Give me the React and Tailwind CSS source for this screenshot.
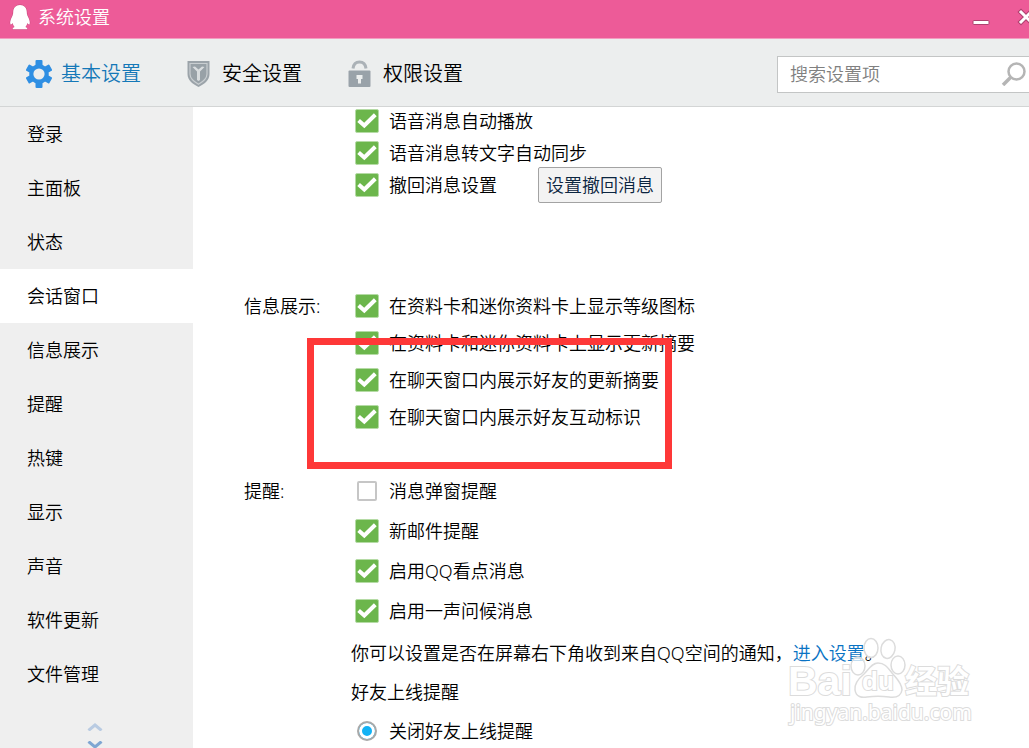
import React from "react";

const sections = ["登录", "主面板", "状态", "会话窗口", "信息展示", "提醒", "热键", "显示", "声音", "软件更新", "文件管理"];

function Penguin() {
  return (
    <svg className="h-7 w-6 shrink-0" viewBox="0 0 24 28" aria-hidden="true">
      <path
        d="M12 2C7.800 2 5.200 5 5.200 9.200C5.200 11 4.800 12 3.900 14C2.500 16.800 1.800 19.500 2.400 21C3 22.200 4 21 4.600 20C5 21.800 5.800 23 6.600 24C5 24.700 4.300 25.500 4.800 26.300H19.200C19.700 25.500 19 24.700 17.400 24C18.200 23 19 21.800 19.400 20C20 21 21 22.200 21.600 21C22.200 19.500 21.500 16.800 20.100 14C19.200 12 18.800 11 18.800 9.200C18.800 5 16.200 2 12 2Z"
        fill="#fff"
        stroke="#c64a7d"
        strokeWidth="1"
        paintOrder="stroke"
      />
    </svg>
  );
}

function Gear() {
  return (
    <svg className="h-7 w-[26px]" viewBox="0 0 26 28" aria-hidden="true">
      <g fill="#2f8fe3">
        <rect x="9.500" y="0" width="7" height="28" rx="1" />
        <rect x="9.500" y="0.500" width="7" height="27" rx="1" transform="rotate(60 13 14)" />
        <rect x="9.500" y="0.500" width="7" height="27" rx="1" transform="rotate(-60 13 14)" />
        <circle cx="13" cy="14" r="9.800" />
      </g>
      <circle cx="13" cy="14" r="5.600" fill="#eceeee" />
    </svg>
  );
}

function Shield() {
  return (
    <svg className="h-7 w-6" viewBox="0 0 24 28" aria-hidden="true">
      <path d="M0.500 1H22.500V14C22.500 20 17.500 24 11.500 27C5.500 24 0.500 20 0.500 14Z" fill="#9ba3a9" />
      <path d="M3 3.500H20V14C20 18.500 16 21.700 11.500 24.300C7 21.700 3 18.500 3 14Z" fill="#98a1a7" stroke="#c9ced1" strokeWidth="1.200" />
      <path d="M5.500 7L10 11.500V20L11.500 21L13 20V11.500L17.500 7L15 6.500L11.500 9.500L8 6.500Z" fill="#d9dddf" />
    </svg>
  );
}

function Lock() {
  return (
    <svg className="h-7 w-6" viewBox="0 0 24 28" aria-hidden="true">
      <path d="M5 8.500C5.500 4 8 2 11.500 2S17.500 4 18 8.500" fill="none" stroke="#abb2b7" strokeWidth="3" />
      <rect x="0.500" y="10.500" width="22" height="16.500" rx="1" fill="#99a2a9" />
      <path d="M8.500 15H14.500V19H13V23.500H10V19H8.500Z" fill="#eceeee" />
    </svg>
  );
}

const tabs = [
  { name: "基本设置", Icon: Gear, style: "text-[#1478b8]" },
  { name: "安全设置", Icon: Shield, style: "text-black" },
  { name: "权限设置", Icon: Lock, style: "text-black" },
];

function Check({ children, off = false }) {
  return (
    <label className="flex items-center gap-[10px] whitespace-nowrap">
      <span className="relative flex size-6 shrink-0 items-center justify-center">
        <input
          type="checkbox"
          defaultChecked={!off}
          className="peer size-5 appearance-none rounded-[2px] border-2 border-[#c6c6c6] bg-white checked:size-6 checked:border checked:border-[#b5dba5] checked:bg-[#6cb64c]"
        />
        <svg className="pointer-events-none absolute inset-0 hidden size-6 peer-checked:block" viewBox="0 0 24 24" aria-hidden="true">
          <path d="M3.600 11.500L9.300 16.500L20.300 5.800" fill="none" stroke="#fff" strokeWidth="4" />
        </svg>
      </span>
      <span>{children}</span>
    </label>
  );
}

function Watermark() {
  return (
    <svg className="pointer-events-none absolute right-[52px] bottom-[18px] h-[96px] w-[192px]" viewBox="0 0 192 96" aria-hidden="true">
      <g fill="#fff" fillOpacity="0.750" stroke="#dcdcdc" strokeWidth="1.500">
        <ellipse cx="73" cy="32" rx="7" ry="9" />
        <ellipse cx="86" cy="14" rx="7" ry="9.500" />
        <ellipse cx="103" cy="15" rx="7" ry="9.500" transform="rotate(12 103 15)" />
        <ellipse cx="113" cy="31" rx="7" ry="9" />
        <path d="M93 29C87 29 84 35 79 40C73 45 69 50 70 56C71 63 77 64 82 63C89 62 97 62 104 63C111 64 116 62 117 56C117 49 111 44 107 39C103 34 100 29 93 29Z" />
      </g>
      <g fill="#fff" stroke="#dcdcdc" strokeWidth="2" paintOrder="stroke">
        <g fontFamily="'Liberation Sans', 'Noto Sans CJK SC', sans-serif" fontWeight="700">
          <text x="3" y="61" fontSize="41">Bai</text>
          <text x="77" y="56" fontSize="26">du</text>
          <text x="120" y="59" fontSize="32">经验</text>
        </g>
        <text x="5" y="86" fontSize="21" fontWeight="400" fontFamily="'Noto Sans', sans-serif">jingyan.baidu.com</text>
      </g>
    </svg>
  );
}

export default function App() {
  return (
    <div className="flex h-screen flex-col overflow-hidden bg-white font-['Noto_Sans','Noto_Sans_CJK_SC',sans-serif] text-[18px] leading-6 font-[350] text-black">
      <header className="flex h-[39px] shrink-0 items-center border-b border-[#f39dc0] bg-[#ed5b98] pb-1 pl-2 text-white">
        <Penguin />
        <h1 className="ml-1.5">系统设置</h1>
        <div className="ml-auto flex">
          <button type="button" aria-label="最小化" className="h-8 w-11">
            <svg className="h-8 w-11" viewBox="0 0 44 32">
              <rect x="16" y="19.500" width="16" height="4" rx="1" fill="#fff" stroke="#ae416f" />
            </svg>
          </button>
          <button type="button" aria-label="关闭" className="h-8 w-7">
            <svg className="h-8 w-7" viewBox="0 0 28 32">
              <g fill="none" strokeLinecap="square">
                <path d="M20 11L30 21M30 11L20 21" stroke="#ae416f" strokeWidth="5" />
                <path d="M20 11L30 21M30 11L20 21" stroke="#fff" strokeWidth="3" />
              </g>
            </svg>
          </button>
        </div>
      </header>

      <div className="flex h-[68px] shrink-0 items-center border-b border-[#d3d5d5] bg-[#eceeee] pt-[3px] pl-[26px]">
        <nav className="flex gap-[46px] text-[20px]">
          {tabs.map(({ name, Icon, style }) => (
            <button key={name} type="button" className={`flex items-center gap-[9px] whitespace-nowrap ${style}`}>
              <span className="flex w-[26px]"><Icon /></span>
              {name}
            </button>
          ))}
        </nav>
        <div className="ml-auto flex h-[37px] w-[252px] items-center border border-r-0 border-[#c3c5c5] bg-white pl-3">
          <input type="text" aria-label="搜索设置项" placeholder="搜索设置项" className="min-w-0 flex-1 outline-none placeholder:text-[#808080]" />
          <button type="button" aria-label="搜索" className="w-7">
            <svg className="h-6 w-7" viewBox="0 0 28 24">
              <circle cx="15.500" cy="9.500" r="8" fill="none" stroke="#b5b5b5" strokeWidth="2.500" />
              <path d="M10 15L2 23" stroke="#b5b5b5" strokeWidth="3.500" />
            </svg>
          </button>
        </div>
      </div>

      <div className="flex min-h-0 flex-1">
        <aside className="w-[193px] shrink-0 overflow-hidden bg-[#efefef]">
          <nav>
            {sections.map((name) => (
              <a key={name} href="#" className={`flex h-[54px] items-center pl-[27px] ${name === "会话窗口" ? "bg-white" : ""}`}>
                {name}
              </a>
            ))}
          </nav>
          <div className="flex flex-col items-center gap-[10px] pt-[22px] pr-1">
            <button type="button" aria-label="向上">
              <svg className="h-2 w-4" viewBox="0 0 16 8"><path d="M1.500 7.500L8 2L14.500 7.500" fill="none" stroke="#b9cbe2" strokeWidth="3" /></svg>
            </button>
            <button type="button" aria-label="向下">
              <svg className="h-2 w-4" viewBox="0 0 16 8"><path d="M1.500 0.500L8 6L14.500 0.500" fill="none" stroke="#7fa6d2" strokeWidth="3" /></svg>
            </button>
          </div>
        </aside>

        <main className="relative min-w-0 flex-1 overflow-hidden pl-[51px]">
          <section className="flex flex-col gap-1 pl-[111px]">
            <div className="flex h-7 items-center"><Check>语音消息自动播放</Check></div>
            <div className="flex h-7 items-center"><Check>语音消息转文字自动同步</Check></div>
            <div className="flex h-7 items-center gap-[41px]">
              <Check>撤回消息设置</Check>
              <button type="button" className="h-9 shrink-0 rounded-[2px] border border-[#a3a3a3] bg-[#f3f3f3] px-[7px] text-[#0b2540]">设置撤回消息</button>
            </div>
          </section>

          <section className="relative mt-[88px] flex">
            <h2 className="flex h-[37px] w-[111px] shrink-0 items-center">信息展示:</h2>
            <div>
              <div className="flex h-[37px] items-center"><Check>在资料卡和迷你资料卡上显示等级图标</Check></div>
              <div className="flex h-[37px] items-center"><Check>在资料卡和迷你资料卡上显示更新摘要</Check></div>
              <div className="flex h-[37px] items-center"><Check>在聊天窗口内展示好友的更新摘要</Check></div>
              <div className="flex h-[37px] items-center"><Check>在聊天窗口内展示好友互动标识</Check></div>
            </div>
            <div className="pointer-events-none absolute top-[51px] left-[63px] h-[131px] w-[365px] border-[7px] border-[#fe3838]" />
          </section>

          <section className="mt-9 flex">
            <h2 className="flex h-10 w-[107px] shrink-0 items-center">提醒:</h2>
            <div>
              <div className="pl-1">
                <div className="flex h-10 items-center"><Check off>消息弹窗提醒</Check></div>
                <div className="flex h-10 items-center"><Check>新邮件提醒</Check></div>
                <div className="flex h-10 items-center"><Check>启用QQ看点消息</Check></div>
                <div className="flex h-10 items-center"><Check>启用一声问候消息</Check></div>
              </div>
              <div className="pt-[2px]">
                <p className="flex h-[39px] items-center whitespace-nowrap">
                  你可以设置是否在屏幕右下角收到来自QQ空间的通知，<a href="#" className="text-[#0a73c4]">进入设置</a>。
                </p>
                <h3 className="flex h-[39px] items-center">好友上线提醒</h3>
                <label className="flex h-[39px] items-center gap-[10px] pl-1">
                  <span className="flex size-6 items-center justify-center">
                    <input
                      type="radio"
                      name="friend-online"
                      defaultChecked
                      className="size-5 appearance-none rounded-full border-2 border-[#a9a9a9] bg-white checked:bg-[#12b2f5] checked:shadow-[inset_0_0_0_3px_#fff]"
                    />
                  </span>
                  关闭好友上线提醒
                </label>
              </div>
            </div>
          </section>
          <Watermark />
        </main>
      </div>
    </div>
  );
}
